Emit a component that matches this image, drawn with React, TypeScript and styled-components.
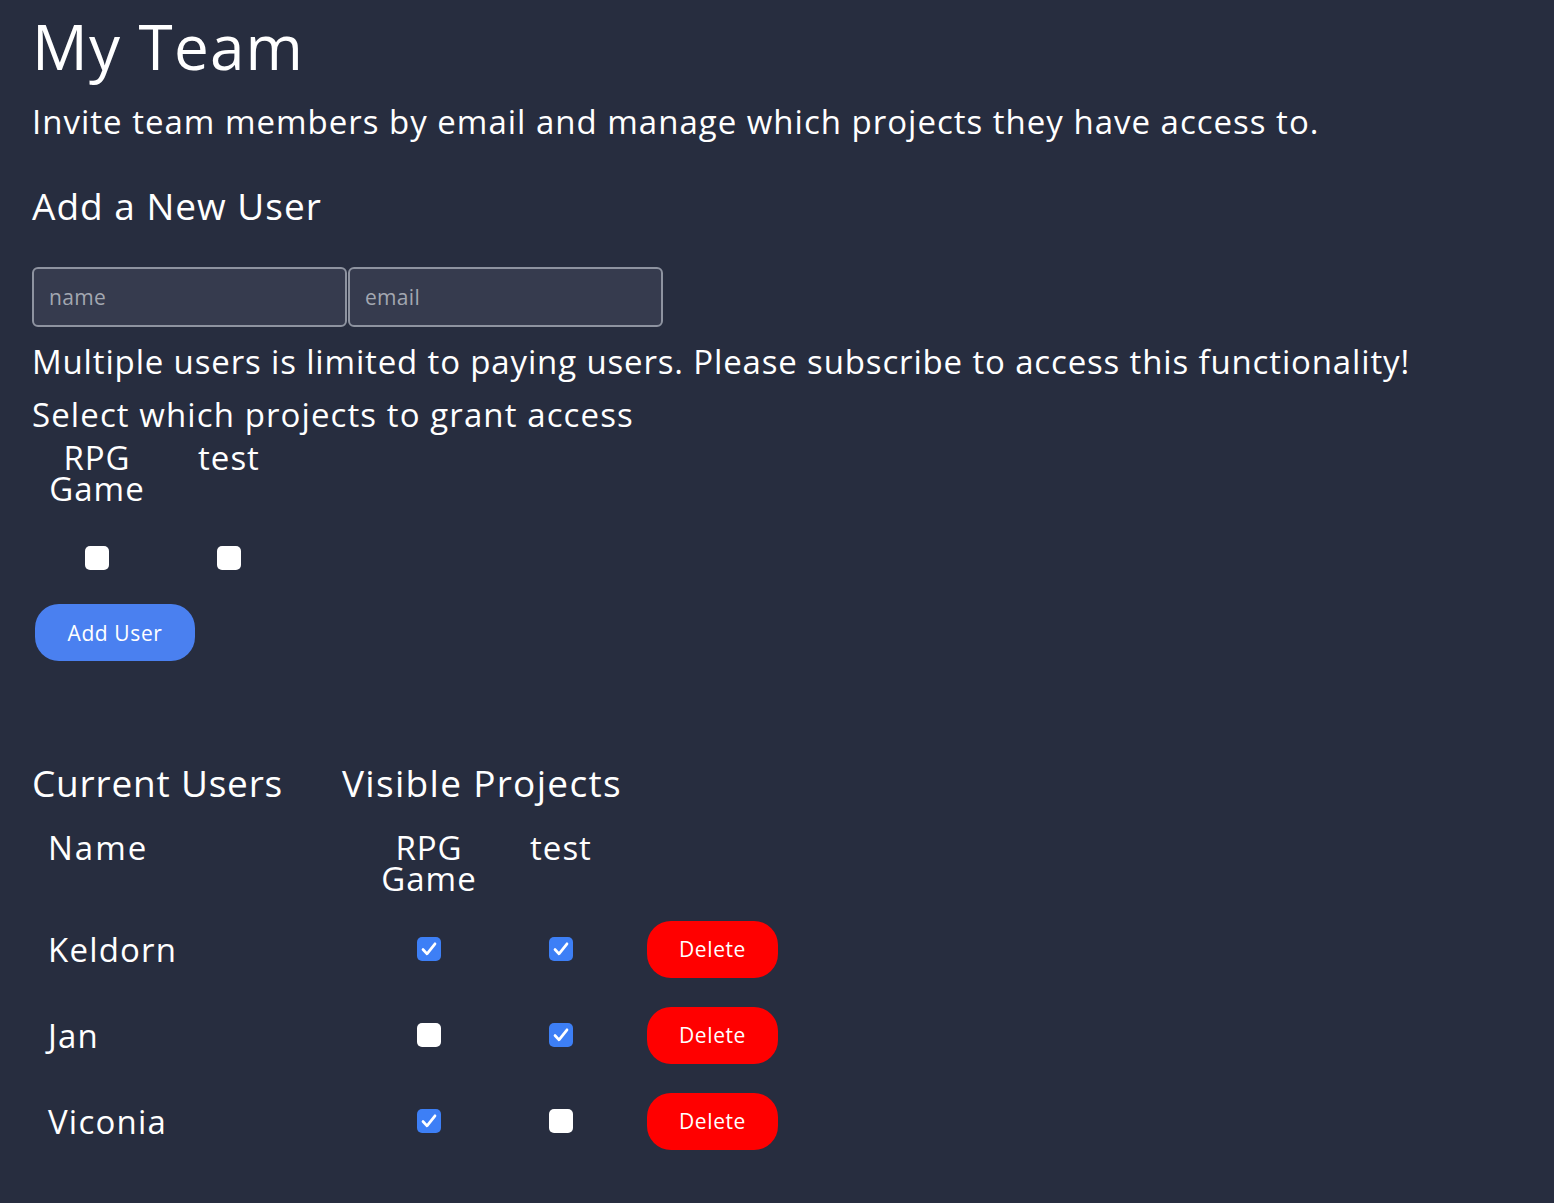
import React, { useState } from "react";
import styled, { createGlobalStyle } from "styled-components";

const GlobalStyle = createGlobalStyle`
  html, body {
    margin: 0;
    padding: 0;
    background: #272d3f;
  }
  body {
    font-family: "Open Sans", "Noto Sans", sans-serif;
    color: #ffffff;
  }
`;

const Page = styled.div`
  min-height: 1203px;
  box-sizing: border-box;
  padding: 10px 32px 0 32px;
  background: #272d3f;
  letter-spacing: 1px;
`;

const Title = styled.h1`
  margin: 0;
  font-size: 62px;
  line-height: 72px;
  font-weight: 500;
  letter-spacing: 1.2px;
`;

const Lead = styled.p`
  margin: 20px 0 0 0;
  font-size: 33px;
  line-height: 40px;
`;

const SectionTitle = styled.h2<{ $top: number }>`
  margin: ${(p) => p.$top}px 0 0 0;
  font-size: 37px;
  line-height: 44px;
  font-weight: 500;
`;

const InputRow = styled.div`
  display: flex;
  gap: 1px;
  margin-top: 39px;
`;

const TextInput = styled.input`
  box-sizing: border-box;
  width: 315px;
  height: 60px;
  padding: 0 15px;
  background: #363b4e;
  border: 2px solid #8e93a0;
  border-radius: 6px;
  color: #ffffff;
  font-family: "Open Sans", "Noto Sans", sans-serif;
  font-size: 21px;
  letter-spacing: 0.3px;
  outline: none;
  &::placeholder {
    color: #a3a7b1;
  }
`;

const Notice = styled.p<{ $top: number; $spacing: number }>`
  margin: ${(p) => p.$top}px 0 0 0;
  font-size: 33px;
  line-height: 40px;
  letter-spacing: ${(p) => p.$spacing}px;
`;

const ProjectGrid = styled.div`
  display: grid;
  grid-template-columns: 98px 98px;
  column-gap: 34px;
  row-gap: 42px;
  margin: 7px 0 0 16px;
`;

const ColLabel = styled.div`
  font-size: 33px;
  line-height: 31px;
  text-align: center;
  align-self: start;
`;

const Cell = styled.div`
  display: flex;
  justify-content: center;
  align-items: center;
`;

const Box = styled.button<{ $checked: boolean }>`
  width: 24px;
  height: 24px;
  padding: 0;
  border: none;
  border-radius: 5px;
  background: ${(p) => (p.$checked ? "#3d7ff6" : "#ffffff")};
  display: flex;
  align-items: center;
  justify-content: center;
  cursor: pointer;
  overflow: hidden;
`;

const PillButton = styled.button<{ $color: string; $width: number }>`
  width: ${(p) => p.$width}px;
  height: 57px;
  border: none;
  border-radius: 24px;
  background: ${(p) => p.$color};
  color: #ffffff;
  font-family: "Open Sans", "Noto Sans", sans-serif;
  font-size: 21px;
  font-weight: 500;
  letter-spacing: 0.6px;
  cursor: pointer;
`;

const AddWrap = styled.div`
  margin: 34px 0 0 3px;
`;

const HeaderRow = styled.div`
  display: flex;
  margin-top: 100px;
`;

const HeaderCell = styled.h2`
  margin: 0;
  font-size: 37px;
  line-height: 44px;
  font-weight: 500;
  &:first-child {
    width: 310px;
    letter-spacing: 0.8px;
  }
  &:last-child {
    letter-spacing: 1.3px;
  }
`;

const UserTable = styled.div`
  display: grid;
  grid-template-columns: 298px 98px 98px 140px;
  grid-template-rows: 74px;
  column-gap: 34px;
  grid-auto-rows: 86px;
  margin: 27px 0 0 16px;
  letter-spacing: 1.2px;
`;

const HeadCell = styled.div<{ $center?: boolean }>`
  font-size: 33px;
  line-height: 31px;
  text-align: ${(p) => (p.$center ? "center" : "left")};
  letter-spacing: ${(p) => (p.$center ? "1px" : "2px")};
`;

const NameCell = styled.div`
  font-size: 33px;
  display: flex;
  align-items: center;
`;

const ActionCell = styled.div`
  display: flex;
  align-items: center;
  padding-left: 3px;
`;

function Check({ checked, onToggle }: { checked: boolean; onToggle: () => void }) {
  return (
    <Box $checked={checked} onClick={onToggle} aria-pressed={checked}>
      {checked && (
        <svg width="24" height="24" viewBox="0 0 24 24" fill="none">
          <path d="M6 12.5 L10 16.8 L18 6.8" stroke="#ffffff" strokeWidth="2.7" strokeLinecap="round" strokeLinejoin="round" />
        </svg>
      )}
    </Box>
  );
}

const projects = ["RPG Game", "test"];

export default function App() {
  const [newAccess, setNewAccess] = useState([false, false]);
  const [users, setUsers] = useState([
    { name: "Keldorn", access: [true, true] },
    { name: "Jan", access: [false, true] },
    { name: "Viconia", access: [true, false] },
  ]);

  const toggleUser = (u: number, p: number) =>
    setUsers((prev) =>
      prev.map((user, i) =>
        i === u ? { ...user, access: user.access.map((a, j) => (j === p ? !a : a)) } : user
      )
    );

  return (
    <Page>
      <GlobalStyle />
      <Title>My Team</Title>
      <Lead>Invite team members by email and manage which projects they have access to.</Lead>
      <SectionTitle $top={42}>Add a New User</SectionTitle>
      <InputRow>
        <TextInput placeholder="name" />
        <TextInput placeholder="email" />
      </InputRow>
      <Notice $top={15} $spacing={0.85}>
        Multiple users is limited to paying users. Please subscribe to access this functionality!
      </Notice>
      <Notice $top={13} $spacing={1.1}>Select which projects to grant access</Notice>
      <ProjectGrid>
        {projects.map((p) => (
          <ColLabel key={p}>{p}</ColLabel>
        ))}
        {newAccess.map((a, i) => (
          <Cell key={i}>
            <Check checked={a} onToggle={() => setNewAccess((prev) => prev.map((v, j) => (j === i ? !v : v)))} />
          </Cell>
        ))}
      </ProjectGrid>
      <AddWrap>
        <PillButton $color="#4a80f0" $width={160}>Add User</PillButton>
      </AddWrap>
      <HeaderRow>
        <HeaderCell>Current Users</HeaderCell>
        <HeaderCell>Visible Projects</HeaderCell>
      </HeaderRow>
      <UserTable>
        <HeadCell>Name</HeadCell>
        {projects.map((p) => (
          <HeadCell key={p} $center>{p}</HeadCell>
        ))}
        <HeadCell />
        {users.map((u, ui) => (
          <React.Fragment key={u.name}>
            <NameCell>{u.name}</NameCell>
            {u.access.map((a, pi) => (
              <Cell key={pi}>
                <Check checked={a} onToggle={() => toggleUser(ui, pi)} />
              </Cell>
            ))}
            <ActionCell>
              <PillButton $color="#ff0000" $width={131}>Delete</PillButton>
            </ActionCell>
          </React.Fragment>
        ))}
      </UserTable>
    </Page>
  );
}
